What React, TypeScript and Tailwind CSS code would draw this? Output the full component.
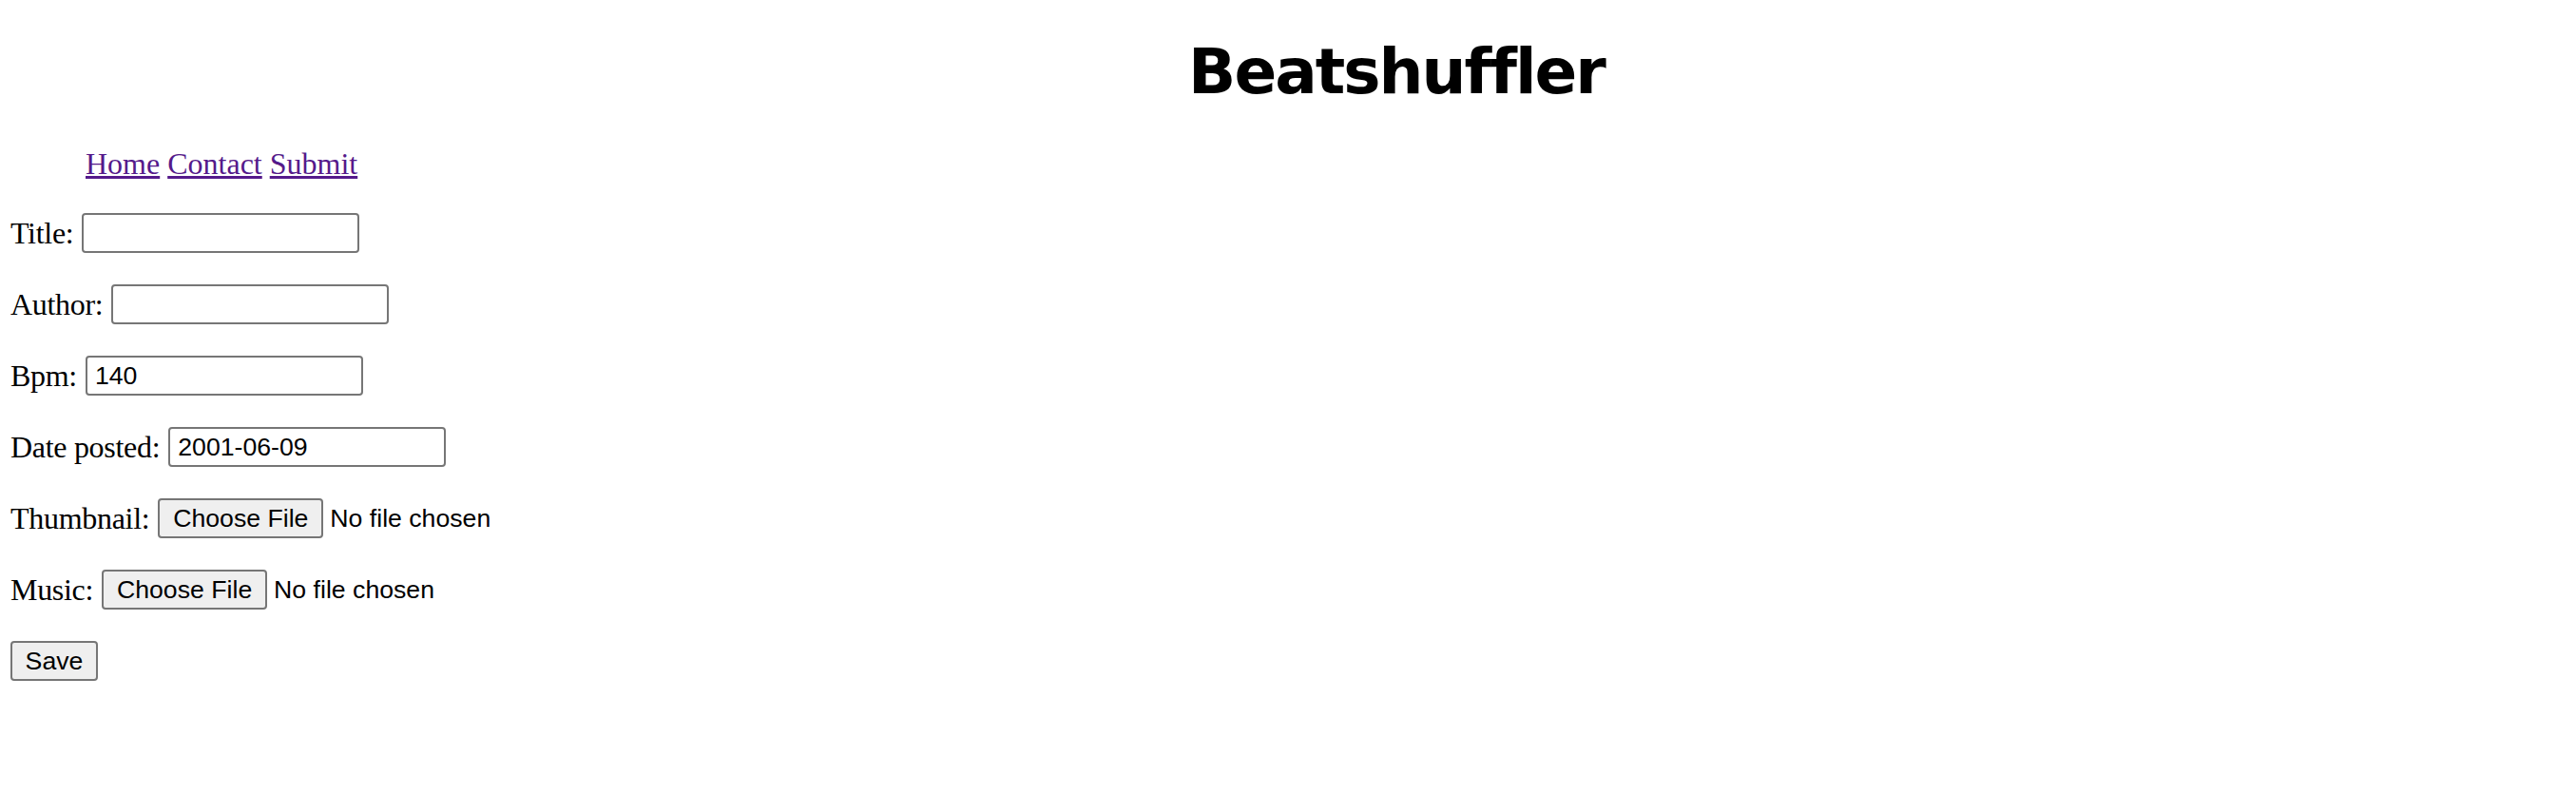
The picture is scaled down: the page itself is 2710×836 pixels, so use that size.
import { useState } from "react";

const labelCls =
  "font-['Liberation_Serif','Times_New_Roman',serif] text-[32px] leading-none tracking-[-0.3px] text-black whitespace-nowrap";

const inputCls =
  "h-[42px] w-[292px] rounded-[4px] border-2 border-[#767676] bg-white pl-[8px] font-['Liberation_Sans',Arial,sans-serif] text-[26.67px] text-black outline-none";

const btnCls =
  "h-[42px] rounded-[4px] border-2 border-[#767676] bg-[#efefef] font-['Liberation_Sans',Arial,sans-serif] text-[26.67px] leading-none text-black";

function TextRow({ label, value }: { label: string; value?: string }) {
  const [val, setVal] = useState(value ?? "");
  return (
    <div className="flex h-[42px] items-center gap-[9px]">
      <span className={labelCls}>{label}</span>
      <input
        type="text"
        className={inputCls}
        value={val}
        onChange={(e) => setVal(e.target.value)}
      />
    </div>
  );
}

function FileRow({ label }: { label: string }) {
  return (
    <div className="flex h-[42px] items-center gap-[9px]">
      <span className={labelCls}>{label}</span>
      <div className="flex items-center gap-[7px]">
        <button type="button" className={`${btnCls} w-[174px]`}>
          Choose File
        </button>
        <span className="font-['Liberation_Sans',Arial,sans-serif] text-[26.67px] leading-none text-black whitespace-nowrap">
          No file chosen
        </span>
      </div>
    </div>
  );
}

export default function App() {
  return (
    <div className="min-h-screen w-full bg-white">
      {/* Header */}
      <header className="pt-[43px]">
        <h1 className="pl-[228px] text-center font-['DejaVu_Sans',Verdana,sans-serif] text-[66px] font-bold leading-none tracking-[-2px] text-black">
          Beatshuffler
        </h1>
      </header>

      {/* Nav */}
      <nav className="mt-[45px] pl-[90px] font-['Liberation_Serif','Times_New_Roman',serif] text-[32px] leading-[37px] text-[#551a8b]">
        <a href="#" className="underline">Home</a>{" "}
        <a href="#" className="underline">Contact</a>{" "}
        <a href="#" className="underline">Submit</a>
      </nav>

      {/* Form */}
      <form
        className="mt-[33px] flex flex-col gap-[33px] pl-[11px]"
        onSubmit={(e) => e.preventDefault()}
      >
        <TextRow label="Title:" />
        <TextRow label="Author:" />
        <TextRow label="Bpm:" value="140" />
        <TextRow label="Date posted:" value="2001-06-09" />
        <FileRow label="Thumbnail:" />
        <FileRow label="Music:" />
        <div className="flex h-[42px] items-center">
          <button type="submit" className={`${btnCls} w-[92px]`}>
            Save
          </button>
        </div>
      </form>
    </div>
  );
}
